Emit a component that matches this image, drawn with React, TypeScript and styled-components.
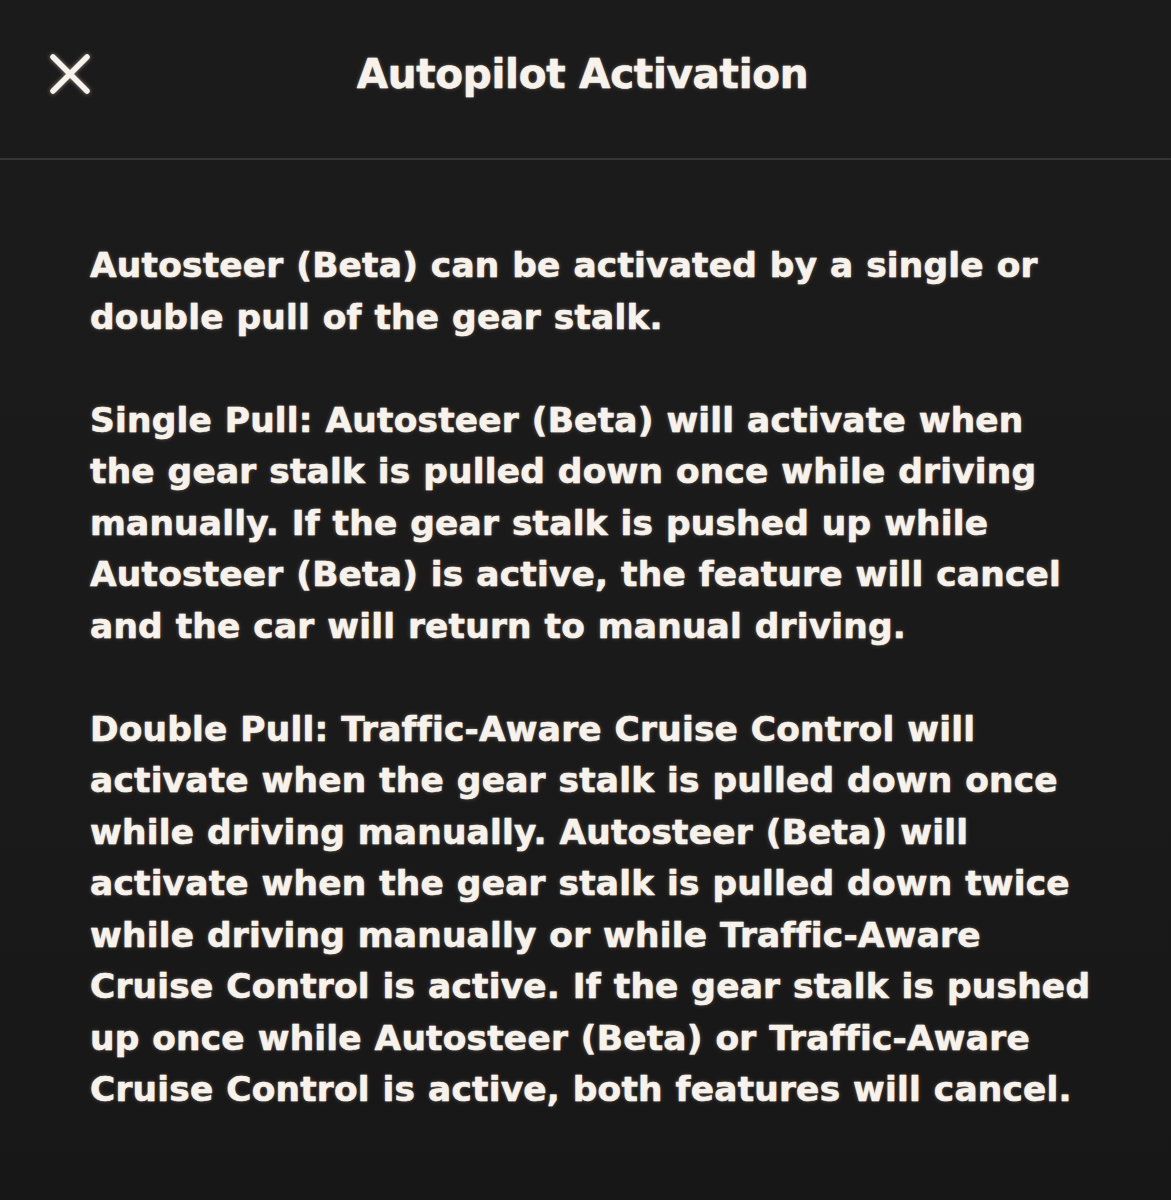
import React from "react";
import styled, { createGlobalStyle } from "styled-components";

const GlobalStyle = createGlobalStyle`
  html, body {
    margin: 0;
    padding: 0;
    background: #1b1a1a;
  }
  * {
    box-sizing: border-box;
  }
`;

const Screen = styled.div`
  min-height: 1200px;
  width: 100%;
  background: linear-gradient(180deg, #1c1b1b 0%, #1b1a1a 60%, #181717 100%);
  color: #f7f3ec;
  font-family: "DejaVu Sans", "Liberation Sans", sans-serif;
  font-weight: bold;
  -webkit-text-stroke: 0.4px #f7f3ec;
  text-shadow: 0 0 1.5px rgba(255, 244, 226, 0.7), 0 0 5px rgba(255, 236, 210, 0.22);
`;

const Header = styled.header`
  height: 160px;
  display: grid;
  grid-template-columns: 1fr auto 1fr;
  align-items: center;
  border-bottom: 2px solid #363434;
  padding-bottom: 10px;
`;

const CloseButton = styled.button`
  justify-self: start;
  margin-left: 48px;
  width: 44px;
  height: 44px;
  padding: 0;
  border: none;
  background: transparent;
  cursor: pointer;
  display: flex;
  align-items: center;
  justify-content: center;
  filter: drop-shadow(0 0 2px rgba(255, 244, 226, 0.5));
`;

const Title = styled.h1`
  margin: 0 6px 0 0;
  font-size: 40.5px;
  font-weight: bold;
  letter-spacing: -0.3px;
  line-height: 1;
  white-space: nowrap;
`;

const Content = styled.main`
  padding: 80px 0 0 90px;
  display: flex;
  flex-direction: column;
  gap: 51.5px;
`;

const Paragraph = styled.p`
  margin: 0;
  font-size: 34.4px;
  letter-spacing: 0.2px;
  word-spacing: 0.6px;
  line-height: 51.5px;
  white-space: nowrap;
`;

const paragraphs: string[][] = [
  [
    "Autosteer (Beta) can be activated by a single or",
    "double pull of the gear stalk.",
  ],
  [
    "Single Pull: Autosteer (Beta) will activate when",
    "the gear stalk is pulled down once while driving",
    "manually. If the gear stalk is pushed up while",
    "Autosteer (Beta) is active, the feature will cancel",
    "and the car will return to manual driving.",
  ],
  [
    "Double Pull: Traffic-Aware Cruise Control will",
    "activate when the gear stalk is pulled down once",
    "while driving manually. Autosteer (Beta) will",
    "activate when the gear stalk is pulled down twice",
    "while driving manually or while Traffic-Aware",
    "Cruise Control is active. If the gear stalk is pushed",
    "up once while Autosteer (Beta) or Traffic-Aware",
    "Cruise Control is active, both features will cancel.",
  ],
];

export default function App() {
  return (
    <>
      <GlobalStyle />
      <Screen>
        <Header>
          <CloseButton aria-label="Close">
            <svg width="44" height="44" viewBox="0 0 44 44">
              <path
                d="M5 5 L39 39 M39 5 L5 39"
                stroke="#f7f3ec"
                strokeWidth="5.5"
                strokeLinecap="round"
                fill="none"
              />
            </svg>
          </CloseButton>
          <Title>Autopilot Activation</Title>
          <div />
        </Header>
        <Content>
          {paragraphs.map((lines, i) => (
            <Paragraph key={i}>
              {lines.map((line, j) => (
                <React.Fragment key={j}>
                  {line}
                  {j < lines.length - 1 && <br />}
                </React.Fragment>
              ))}
            </Paragraph>
          ))}
        </Content>
      </Screen>
    </>
  );
}
